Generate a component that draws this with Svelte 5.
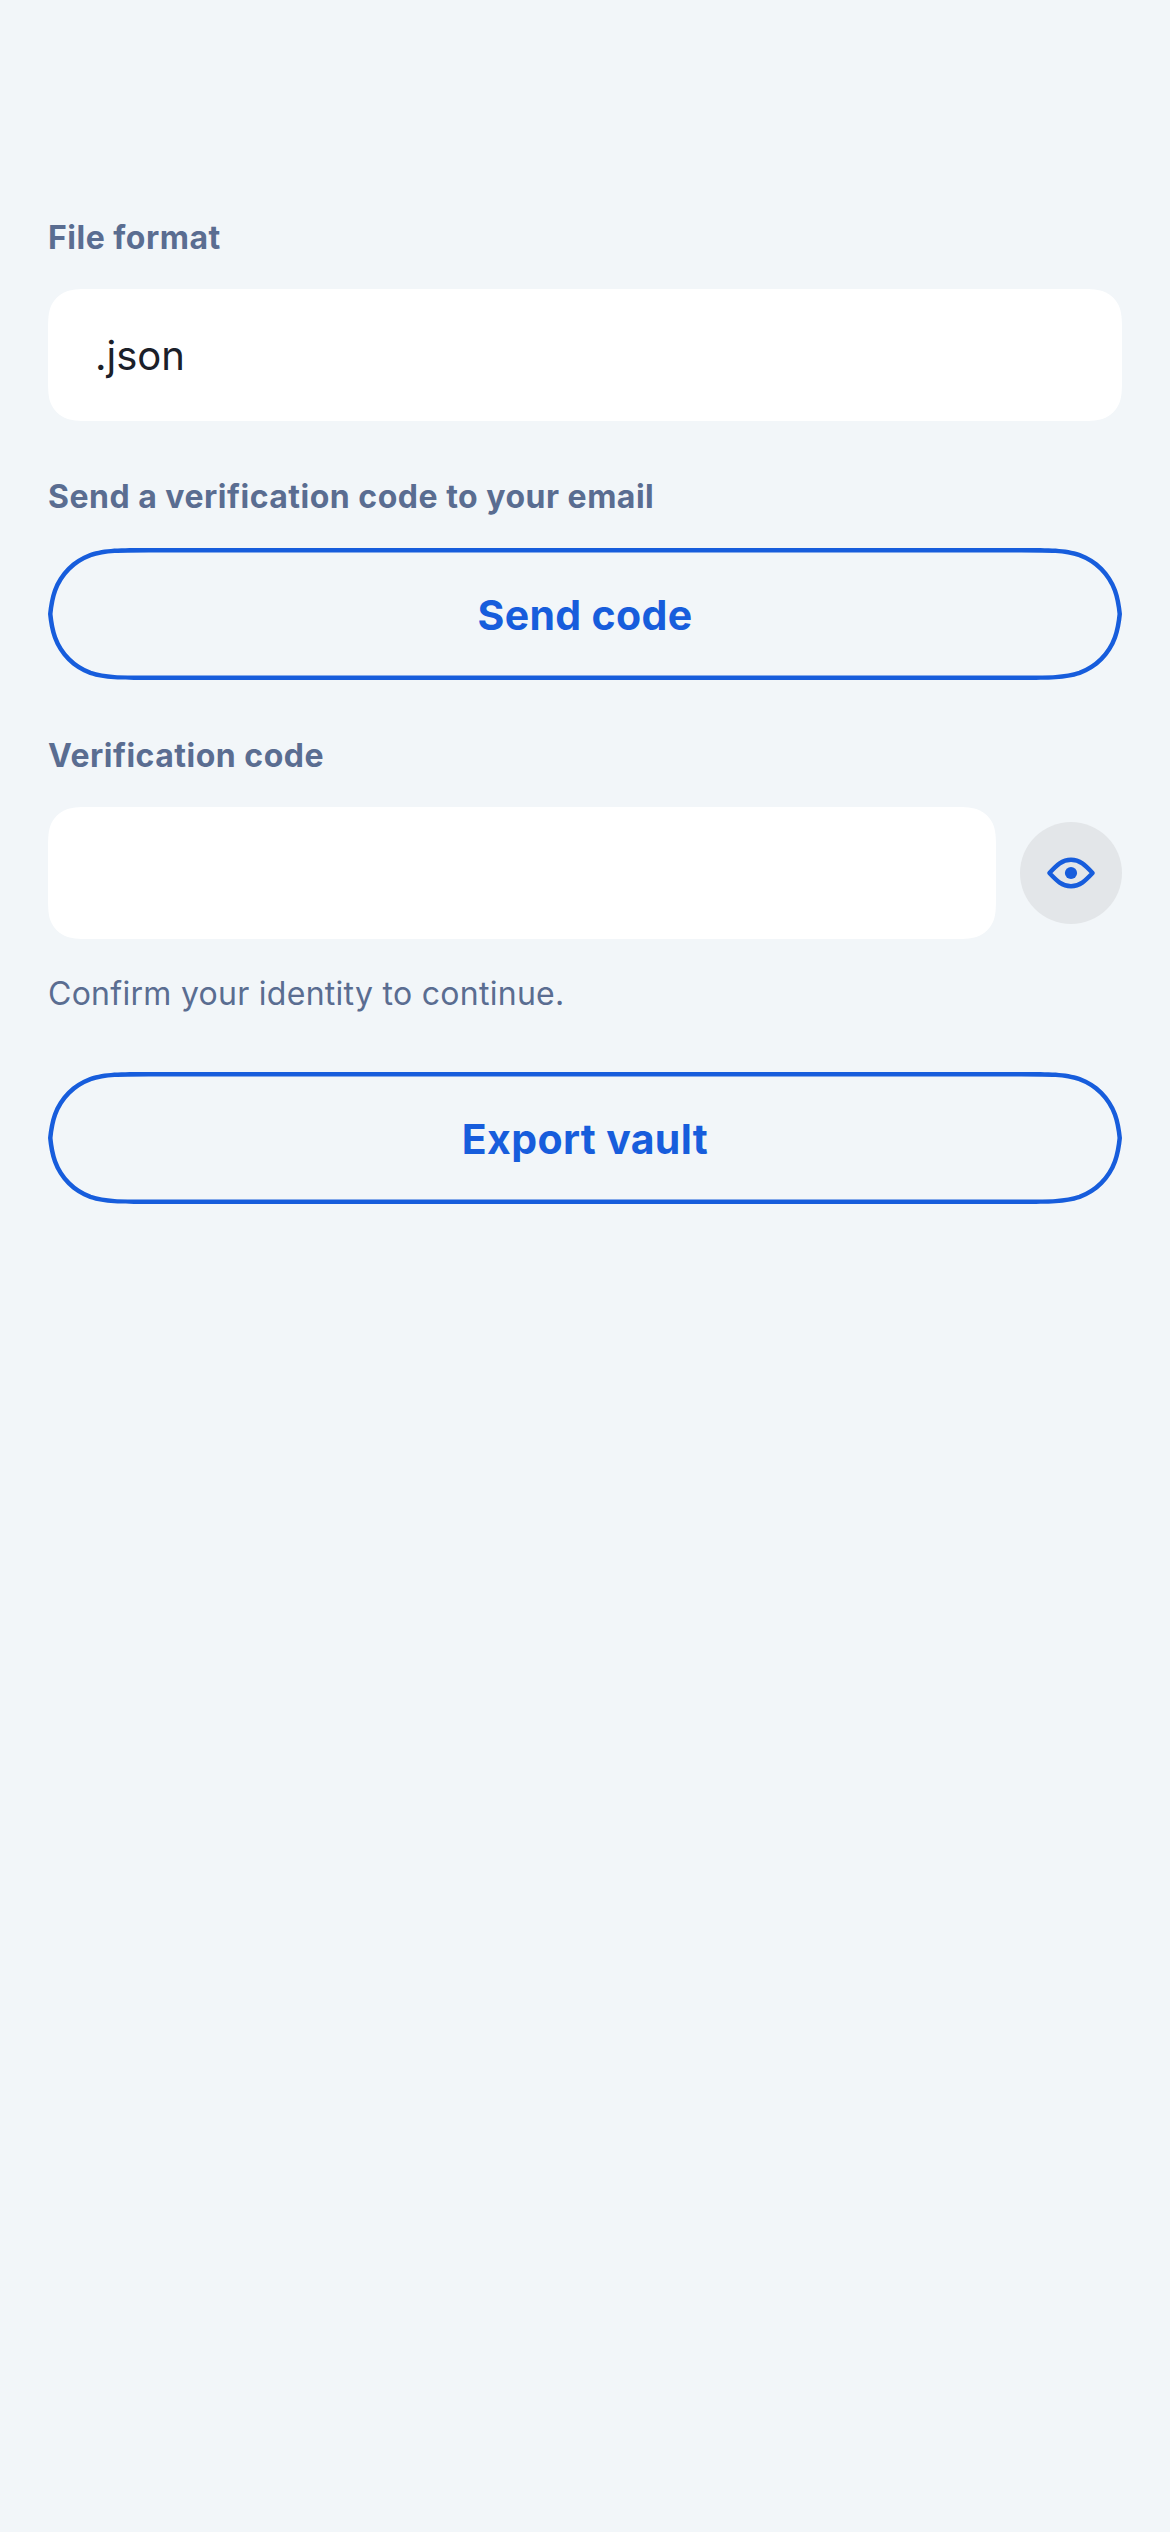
<script>
  // Continuous-curvature rounded rectangle; pill corners meet at mid height.
  function smoothRect(w, h, r) {
    const pill = 2 * r >= h;
    const corner = pill
      ? [[1.52866, 0], [1.08849, 0], [0.868407, 0], [0.63149, 0.07491], [0.37282, 0.16906], [0.16906, 0.37282], [0.07491, 0.63149], [0.035, 0.74], [0.012, 0.88], [0, 1]]
      : [[1.52866, 0], [1.08849, 0], [0.868407, 0], [0.63149, 0.07491], [0.37282, 0.16906], [0.16906, 0.37282], [0.07491, 0.63149], [0, 0.868407], [0, 1.08849], [0, 1.52866]];
    const place = (fx, fy) =>
      corner.map(([x, y]) => [fx ? w - x * r : x * r, fy ? h - y * r : y * r]);
    const draw = (p) => `L${p[0]}C${p.slice(1, 4).join(' ')}C${p.slice(4, 7).join(' ')}C${p.slice(7).join(' ')}`;
    const sides = [
      place(false, false),
      place(false, true).reverse(),
      place(true, true),
      place(true, false).reverse()
    ].map(draw).join('');
    return 'M' + sides.slice(1) + 'Z';
  }

  const pillPath = smoothRect(1074, 132, 66);
  const wideField = smoothRect(1074, 132, 30);
  const codeField = smoothRect(948, 132, 30);
</script>

{#snippet pill(label, id)}
  <button class="pill">
    <svg class="shape" viewBox="0 0 1074 132" aria-hidden="true">
      <clipPath {id}><path d={pillPath} /></clipPath>
      <path d={pillPath} clip-path="url(#{id})" fill="none" stroke="#175ddc" stroke-width="9" />
    </svg>
    <span class="text">{label}</span>
  </button>
{/snippet}

<main>
  <section>
    <div class="label">File format</div>
    <div class="field">
      <svg class="shape" viewBox="0 0 1074 132" aria-hidden="true"><path d={wideField} fill="#fff" /></svg>
      <span class="value">.json</span>
    </div>
  </section>

  <section>
    <div class="label">Send a verification code to your email</div>
    {@render pill('Send code', 'send-outline')}
  </section>

  <section class="verify">
    <div class="label">Verification code</div>
    <div class="row">
      <div class="field">
        <svg class="shape" viewBox="0 0 948 132" aria-hidden="true"><path d={codeField} fill="#fff" /></svg>
      </div>
      <button class="eye" aria-label="Show code">
        <svg width="50" height="32" viewBox="-25 -16 50 32" aria-hidden="true">
          <path d="M-21.6 0C-14-8-9-13.2 0-13.2S14-8 21.6 0C14 8 9 13.2 0 13.2S-14 8-21.6 0Z" fill="none" stroke="#175ddc" stroke-width="4.4" stroke-linejoin="round" />
          <circle r="6.1" fill="#175ddc" />
        </svg>
      </button>
    </div>
    <div class="hint">Confirm your identity to continue.</div>
  </section>

  {@render pill('Export vault', 'export-outline')}
</main>

<style>
  :global(body) {
    background: #f2f6f9;
  }
  main {
    box-sizing: border-box;
    width: 1170px;
    height: 2532px;
    padding: 211px 48px 0;
    background: #f2f6f9;
    font-family: Inter, 'Liberation Sans', sans-serif;
    color: #1b2029;
  }
  section {
    height: 259px;
  }
  .verify {
    height: 343px;
  }
  .label {
    height: 78px;
    line-height: 54px;
    font-size: 32px;
    font-weight: 700;
    letter-spacing: 0.5px;
    color: #5a6d91;
    white-space: nowrap;
  }
  .field,
  .pill {
    display: grid;
    align-items: center;
    width: 1074px;
    height: 132px;
    padding: 0;
    border: 0;
    background: none;
    font: inherit;
  }
  .shape,
  .value,
  .text {
    grid-area: 1 / 1;
  }
  .shape {
    display: block;
    width: 100%;
    height: 132px;
  }
  .value {
    padding: 2px 0 0 47px;
    font-size: 40px;
    line-height: 52px;
  }
  .text {
    padding-top: 1px;
    font-size: 41px;
    line-height: 52px;
    font-weight: 700;
    letter-spacing: 0.35px;
    color: #175ddc;
    text-align: center;
  }
  .row {
    display: flex;
    align-items: center;
    gap: 24px;
  }
  .row .field {
    width: 948px;
  }
  .eye {
    display: grid;
    place-items: center;
    width: 102px;
    height: 102px;
    padding: 0;
    border: 0;
    border-radius: 50%;
    background: #e3e6e9;
  }
  .hint {
    padding-top: 28px;
    line-height: 54px;
    font-size: 32px;
    letter-spacing: 0.28px;
    color: #5a6d91;
    white-space: nowrap;
  }
</style>
